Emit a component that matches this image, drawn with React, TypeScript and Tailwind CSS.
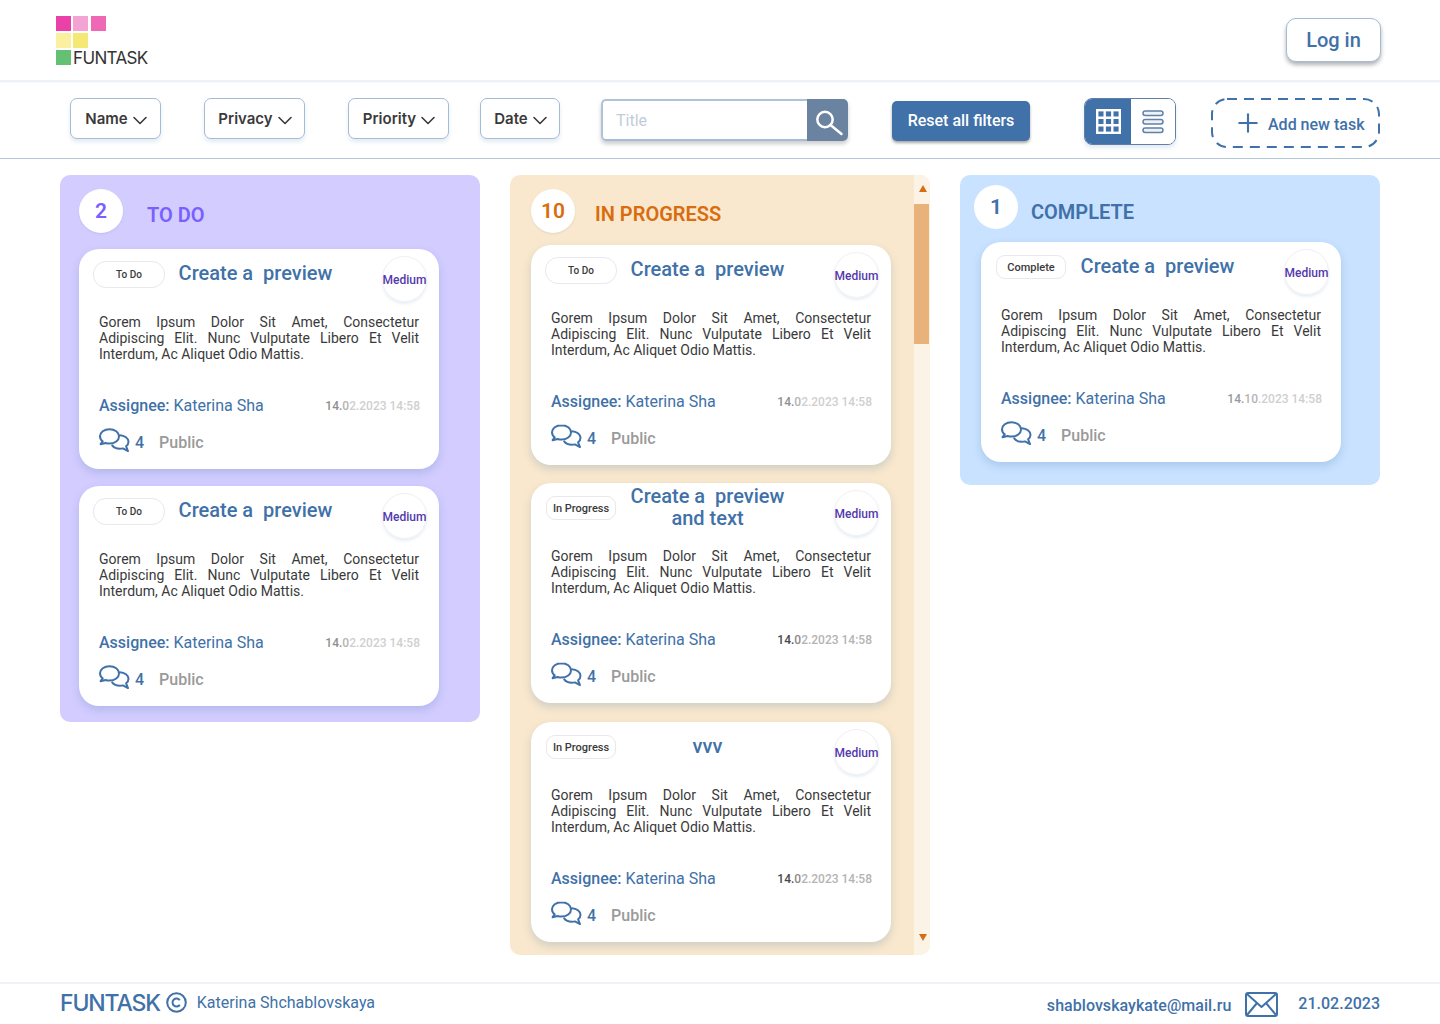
import { Plus } from "lucide-react";

function Comments() {
  return (
    <svg className="mb-[4px]" width="31" height="25" viewBox="0 0 31 25" fill="none" stroke="#4071a8" strokeWidth="2" strokeLinejoin="round" strokeLinecap="round">
      <path d="M10.500 1.200C5.200 1.200 1 4.300 1 8.300c0 2 1 3.800 2.700 5L1.600 16.200l5-1.200c1.200.4 2.500.6 3.900.6 5.300 0 9.500-3.200 9.500-7.200S15.800 1.200 10.500 1.200Z" />
      <path d="M20.900 7.200c4.700.3 8.600 3 8.600 6.600 0 1.800-.9 3.400-2.400 4.500l1.900 4.800-5.100-2.700c-.9.300-1.900.4-3 .4-3.300 0-6.200-1.300-7.700-3.400" />
    </svg>
  );
}

function DateText({ kind }: { kind: "light" | "dark" | "complete" }) {
  if (kind === "dark") {
    return (
      <div className="-mr-px pt-[2px] text-[12px] font-medium text-[#b4b4b4]">
        <span className="text-[#4a4a4a]">14.</span>
        <span className="text-[#8a8a8a]">0</span>2.2023 14:58
      </div>
    );
  }
  if (kind === "complete") {
    return (
      <div className="-mr-px pt-[2px] text-[12px] font-medium text-[#cfcfcf]">
        <span className="text-[#9a9a9a]">14.</span>
        <span className="text-[#b4b4b4]">10</span>.2023 14:58
      </div>
    );
  }
  return (
    <div className="-mr-px pt-[2px] text-[12px] font-medium text-[#cfcfcf]">
      <span className="text-[#8f8f8f]">14.</span>
      <span className="text-[#b4b4b4]">0</span>2.2023 14:58
    </div>
  );
}

function Card({ tag, title, date = "light", className = "" }: { tag: string; title: string[]; date?: "light" | "dark" | "complete"; className?: string }) {
  return (
    <div className={`h-[220px] w-[360px] shrink-0 rounded-[20px] bg-white shadow-[0_4px_8px_rgba(64,113,168,0.22)] ${className}`}>
      <div className="flex h-[65px] pl-[14px] pr-[12px] pt-[2px]">
        <div className={`flex shrink-0 items-center justify-center border border-[#e8e8ee] font-medium text-[#3a3a3a] ${tag === "To Do" ? "mt-[10px] h-[27px] w-[72px] rounded-[13px] text-[10px]" : "ml-[1px] mr-[1px] mt-[11px] h-[24px] w-[70px] rounded-[9px] pt-[2px] text-[11px]"}`}>
          {tag}
        </div>
        <div className={`ml-[13px] w-[155px] shrink-0 whitespace-pre text-center text-[20px] font-medium leading-[22px] text-[#4071a8] ${title.length > 1 ? "pt-0" : "pt-[11px]"}`}>
          {title.map((t) => (
            <div key={t}>{t}</div>
          ))}
        </div>
        <div className="ml-auto mt-[5px] flex h-[46px] w-[45px] shrink-0 items-center justify-center rounded-full border border-[#f0f0f5] pt-[1px] text-[12px] font-medium text-[#5439ac] shadow-[0_2px_3px_rgba(64,113,168,0.12)]">
          Medium
        </div>
      </div>
      <p className="mx-5 text-justify text-[14px] leading-4 text-[#3a3a3a]">
        Gorem Ipsum Dolor Sit Amet, Consectetur Adipiscing Elit. Nunc Vulputate Libero Et Velit Interdum, Ac Aliquet Odio Mattis.
      </p>
      <div className="mx-5 mt-[32px] flex items-center justify-between text-[16px] leading-5 text-[#4071a8]">
        <div className="mt-[1px]">
          <span className="font-medium">Assignee:</span> Katerina Sha
        </div>
        <DateText kind={date} />
      </div>
      <div className="ml-5 mt-[12px] flex items-center">
        <Comments />
        <span className="ml-[5px] text-[16px] font-medium text-[#4071a8]">4</span>
        <span className="ml-[15px] text-[16px] font-medium text-[#9a9a9a]">Public</span>
      </div>
    </div>
  );
}

function Filter({ label, w, ml }: { label: string; w: string; ml: string }) {
  return (
    <button className={`flex h-[41px] shrink-0 items-center justify-center rounded-[7px] border border-[#a3bcd8] bg-white pl-[6px] text-[15px] font-semibold text-[#3a3a3a] shadow-[0_3px_4px_rgba(64,113,168,0.14)] [font-family:Inter,sans-serif] ${w} ${ml}`}>
      <span className="mt-[2px]">{label}</span>
      <svg className="mt-[2px]" width="24" height="24" viewBox="0 0 24 24" fill="none" stroke="#3a3a3a" strokeWidth="1.600" strokeLinecap="round" strokeLinejoin="round">
        <path d="M6 9.500l6 6 6-6" />
      </svg>
    </button>
  );
}

export default function App() {
  return (
    <div className="flex h-[1024px] w-[1440px] flex-col overflow-hidden bg-white [font-family:Roboto,sans-serif]">
      <header className="relative z-10 flex h-[82px] shrink-0 items-start justify-between border-b-2 border-[#eef2f7] pl-[56px] pr-[59px] shadow-[0_1px_2px_#f4f7fa]">
        <div className="mt-4 flex flex-col gap-[2px]">
          <div className="flex gap-[2px]">
            <div className="h-[15px] w-[15px] bg-[#ea41a8]" />
            <div className="h-[15px] w-[15px] bg-[#f4a3d5]" />
            <div className="ml-[1px] h-[15px] w-[15px] bg-[#ee68b6]" />
          </div>
          <div className="flex gap-[2px]">
            <div className="h-[15px] w-[15px] bg-[#fbf0a0]" />
            <div className="h-[15px] w-[15px] bg-[#f6e874]" />
          </div>
          <div className="flex items-end gap-[2px]">
            <div className="h-[15px] w-[15px] bg-[#64c173]" />
            <span className="-mb-[2px] text-[17px] leading-none tracking-[-0.65px] text-[#333] [font-family:Inter,sans-serif]">FUNTASK</span>
          </div>
        </div>
        <button className="mt-[18px] flex h-11 w-[95px] items-center justify-center rounded-[10px] border border-[#a3bcd8] bg-white text-[20px] font-medium text-[#4071a8] shadow-[0_3px_4px_rgba(0,0,0,0.3)]">
          Log in
        </button>
      </header>

      <div className="flex h-[77px] shrink-0 items-start border-b border-[#b4c6d9] pt-[16px]">
        <Filter label="Name" w="w-[91px]" ml="ml-[70px]" />
        <Filter label="Privacy" w="w-[101px]" ml="ml-[43px]" />
        <Filter label="Priority" w="w-[101px]" ml="ml-[43px]" />
        <Filter label="Date" w="w-[80px]" ml="ml-[31px]" />
        <div className="ml-[41px] mt-[1px] flex h-[42px] w-[247px] shrink-0 rounded-[5px] shadow-[0_3px_4px_rgba(0,0,0,0.2)]">
          <div className="flex flex-1 items-center rounded-l-[5px] border-2 border-r-0 border-[#b0c2d6] border-b-[#a3bcd8] bg-white pl-[13px] pt-[1px] text-[16px] text-[#c2ccd8]">Title</div>
          <div className="w-[41px] rounded-r-[5px] bg-[#6a83a0]">
            <svg width="41" height="42" viewBox="0 0 41 42" fill="none" stroke="#fff" strokeWidth="2.500" strokeLinecap="round">
              <circle cx="18" cy="20.500" r="7.700" />
              <path d="M23.500 26l11 9" />
            </svg>
          </div>
        </div>
        <button className="ml-[44px] mt-[3px] flex h-[40px] w-[138px] shrink-0 items-center justify-center rounded-[5px] bg-[#4071a8] text-[16px] font-medium text-white shadow-[0_2px_3px_rgba(0,0,0,0.35)]">
          Reset all filters
        </button>
        <div className="ml-[54px] flex h-[47px] w-[92px] shrink-0 overflow-hidden rounded-[8px] border border-[#5f80a8] shadow-[0_3px_4px_rgba(64,113,168,0.15)]">
          <div className="flex w-[46px] shrink-0 items-center justify-center bg-[#4071a8]">
            <svg width="25" height="25" viewBox="0 0 25 25" fill="none" stroke="#fff" strokeWidth="2.400">
              <rect x="1.200" y="1.200" width="22.600" height="22.600" />
              <path d="M8.700 1v23M16.300 1v23M1 8.700h23M1 16.300h23" />
            </svg>
          </div>
          <div className="flex flex-1 items-center justify-center bg-white">
            <svg width="22" height="24" viewBox="0 0 22 24" fill="#eef2f7" stroke="#5f80a8" strokeWidth="1.500">
              <rect x="1" y="1" width="20" height="4.500" rx="2.200" />
              <rect x="1" y="9.500" width="20" height="4.500" rx="2.200" />
              <rect x="1" y="18" width="20" height="4.500" rx="2.200" />
            </svg>
          </div>
        </div>
        <button className="relative ml-[35px] flex h-[50px] w-[169px] shrink-0 items-center pl-[22px] pt-[2px] text-[16px] font-medium text-[#4071a8]">
          <svg className="absolute inset-0" width="169" height="50" viewBox="0 0 169 50" fill="none" stroke="#4071a8" strokeWidth="2" strokeDasharray="10 7">
            <rect x="1" y="1" width="167" height="48" rx="15" />
          </svg>
          <Plus size={30} strokeWidth={1.700} color="#4071a8" className="-mt-[3px]" />
          <span className="ml-[5px] mt-[2px]">Add new task</span>
        </button>
      </div>

      <main className="flex flex-1 items-start gap-[30px] px-[60px] pt-[16px]">
        <section className="h-[547px] w-[420px] shrink-0 rounded-[10px] bg-[#d3ccff] px-[19px] pt-[14px]">
          <div className="flex h-[60px] items-start">
            <div className="flex h-11 w-11 items-center justify-center rounded-full bg-white pt-[1px] text-[21px] font-semibold text-[#7a5fff] shadow-[0_1px_2px_rgba(64,113,168,0.15)]">2</div>
            <h2 className="ml-[24px] mt-[14px] text-[20px] font-semibold leading-6 text-[#7a5fff]">TO DO</h2>
          </div>
          <Card tag="To Do" title={["Create a  preview"]} />
          <Card tag="To Do" title={["Create a  preview"]} className="mt-[17px]" />
        </section>

        <section className="flex h-[780px] w-[420px] shrink-0 overflow-hidden rounded-[10px] bg-[#f9e8cd]">
          <div className="flex-1 pl-[21px] pt-[14px]">
            <div className="flex h-[56px] items-start">
              <div className="flex h-11 w-11 items-center justify-center rounded-full bg-white pt-[1px] text-[21px] font-semibold text-[#d96c0d] shadow-[0_1px_2px_rgba(64,113,168,0.15)]">10</div>
              <h2 className="ml-[20px] mt-[13px] text-[20px] font-semibold leading-6 text-[#d96c0d]">IN PROGRESS</h2>
            </div>
            <Card tag="To Do" title={["Create a  preview"]} />
            <Card tag="In Progress" title={["Create a  preview", "and text"]} date="dark" className="mt-[18px]" />
            <Card tag="In Progress" title={["vvv"]} date="dark" className="mt-[19px]" />
          </div>
          <div className="flex w-[16px] shrink-0 flex-col items-center bg-[#fbf3e6]">
            <div className="ml-[2px] mt-[10px] h-0 w-0 border-x-[4px] border-b-[7px] border-x-transparent border-b-[#d96c0d]" />
            <div className="mt-[12px] h-[140px] w-[15px] self-start bg-[#e8b27a]" />
            <div className="ml-[2px] mt-[590px] h-0 w-0 border-x-[4px] border-t-[7px] border-x-transparent border-t-[#d96c0d]" />
          </div>
        </section>

        <section className="h-[310px] w-[420px] shrink-0 rounded-[10px] bg-[#c8e2ff] pl-[14px] pt-[10px]">
          <div className="flex h-[57px] items-start">
            <div className="flex h-11 w-11 items-center justify-center rounded-full bg-white pt-[1px] text-[21px] font-semibold text-[#4071a8]">1</div>
            <h2 className="ml-[13px] mt-[15px] text-[20px] font-semibold leading-6 text-[#4071a8]">COMPLETE</h2>
          </div>
          <Card tag="Complete" title={["Create a  preview"]} date="complete" className="ml-[7px]" />
        </section>
      </main>

      <footer className="flex h-[42px] shrink-0 items-center border-t-2 border-[#eef2f7] px-[60px] pb-[3px] text-[#4071a8]">
        <span className="text-[23px] font-medium leading-6 tracking-[-1.15px] [font-family:Inter,sans-serif]">FUNTASK</span>
        <svg className="ml-[6px]" width="21" height="21" viewBox="0 0 21 21" fill="none" stroke="#4071a8" strokeWidth="2">
          <circle cx="10.500" cy="10.500" r="9.300" />
          <path d="M13.800 8.200a4 4 0 1 0 0 4.600" />
        </svg>
        <span className="ml-[10px] mt-[1px] text-[16px]">Katerina Shchablovskaya</span>
        <span className="ml-auto mt-[6px] text-[16px] font-medium tracking-[0.04px]">shablovskaykate@mail.ru</span>
        <svg className="ml-[14px] mt-[4px]" width="33" height="25" viewBox="0 0 33 25" fill="none" stroke="#4071a8" strokeWidth="2" strokeLinejoin="round">
          <rect x="1" y="1" width="31" height="23" rx="2" />
          <path d="M2 2l14.500 13L31 2M2 23l10-12M31 23L21 11" />
        </svg>
        <span className="ml-[20px] mt-[2px] text-[16px] font-medium">21.02.2023</span>
      </footer>
    </div>
  );
}
